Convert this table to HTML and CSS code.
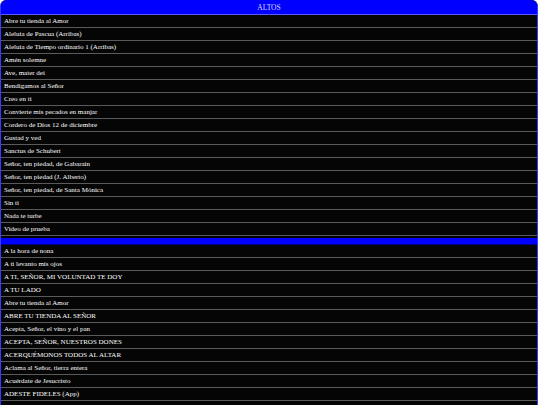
FILE: index.html
```html
<!DOCTYPE html>
<html>
<head>
<meta charset="utf-8">
<link rel="stylesheet" href="styles.css">
</head>
<body>
<div class="panel">
  <div class="head">ALTOS</div>
  <ul class="list">
    <li>Abre tu tienda al Amor</li>
    <li>Aleluia de Pascua (Arribas)</li>
    <li>Aleluia de Tiempo ordinario 1 (Arribas)</li>
    <li>Amén solemne</li>
    <li>Ave, mater dei</li>
    <li>Bendigamos al Señor</li>
    <li>Creo en ti</li>
    <li>Convierte mis pecados en manjar</li>
    <li>Cordero de Dios 12 de diciembre</li>
    <li>Gustad y ved</li>
    <li>Sanctus de Schubert</li>
    <li>Señor, ten piedad, de Gabarain</li>
    <li>Señor, ten piedad (J. Alberto)</li>
    <li>Señor, ten piedad, de Santa Mónica</li>
    <li>Sin ti</li>
    <li>Nada te turbe</li>
    <li>Video de prueba</li>
  </ul>
  <div class="sep"></div>
  <ul class="list">
    <li>A la hora de nona</li>
    <li>A ti levanto mis ojos</li>
    <li>A TI, SEÑOR, MI VOLUNTAD TE DOY</li>
    <li>A TU LADO</li>
    <li>Abre tu tienda al Amor</li>
    <li>ABRE TU TIENDA AL SEÑOR</li>
    <li>Acepta, Señor, el vino y el pan</li>
    <li>ACEPTA, SEÑOR, NUESTROS DONES</li>
    <li>ACERQUÉMONOS TODOS AL ALTAR</li>
    <li>Aclama al Señor, tierra entera</li>
    <li>Acuérdate de Jesucristo</li>
    <li>ADESTE FIDELES (App)</li>
    <li>Adoramos tu cuerpo</li>
  </ul>
</div>
</body>
</html>
```
FILE: styles.css
```css
html, body {
  margin: 0;
  padding: 0;
  background: #fff;
}
.panel {
  width: 536px;
  border: 1px solid #3a3aff;
  border-top: none;
  border-radius: 6px 6px 0 0;
  background: #000;
  font-family: "Liberation Serif", serif;
  font-size: 7px;
  color: #fff;
  overflow: hidden;
}
.head {
  background: #0000ff;
  color: #dcdcff;
  text-align: center;
  font-size: 7.5px;
  height: 14px;
  line-height: 15px;
  border-bottom: 1px solid #5a5aff;
  border-radius: 6px 6px 0 0;
}
.list {
  list-style: none;
  margin: 0;
  padding: 0;
}
.list li {
  height: 12px;
  line-height: 12px;
  padding-left: 3px;
  border-bottom: 1px solid #5a5a5a;
  background: #050505;
  white-space: nowrap;
}
.sep {
  height: 6px;
  background: #0000ff;
  margin-top: 2px;
  border-bottom: 1px solid #00008a;
}
```
